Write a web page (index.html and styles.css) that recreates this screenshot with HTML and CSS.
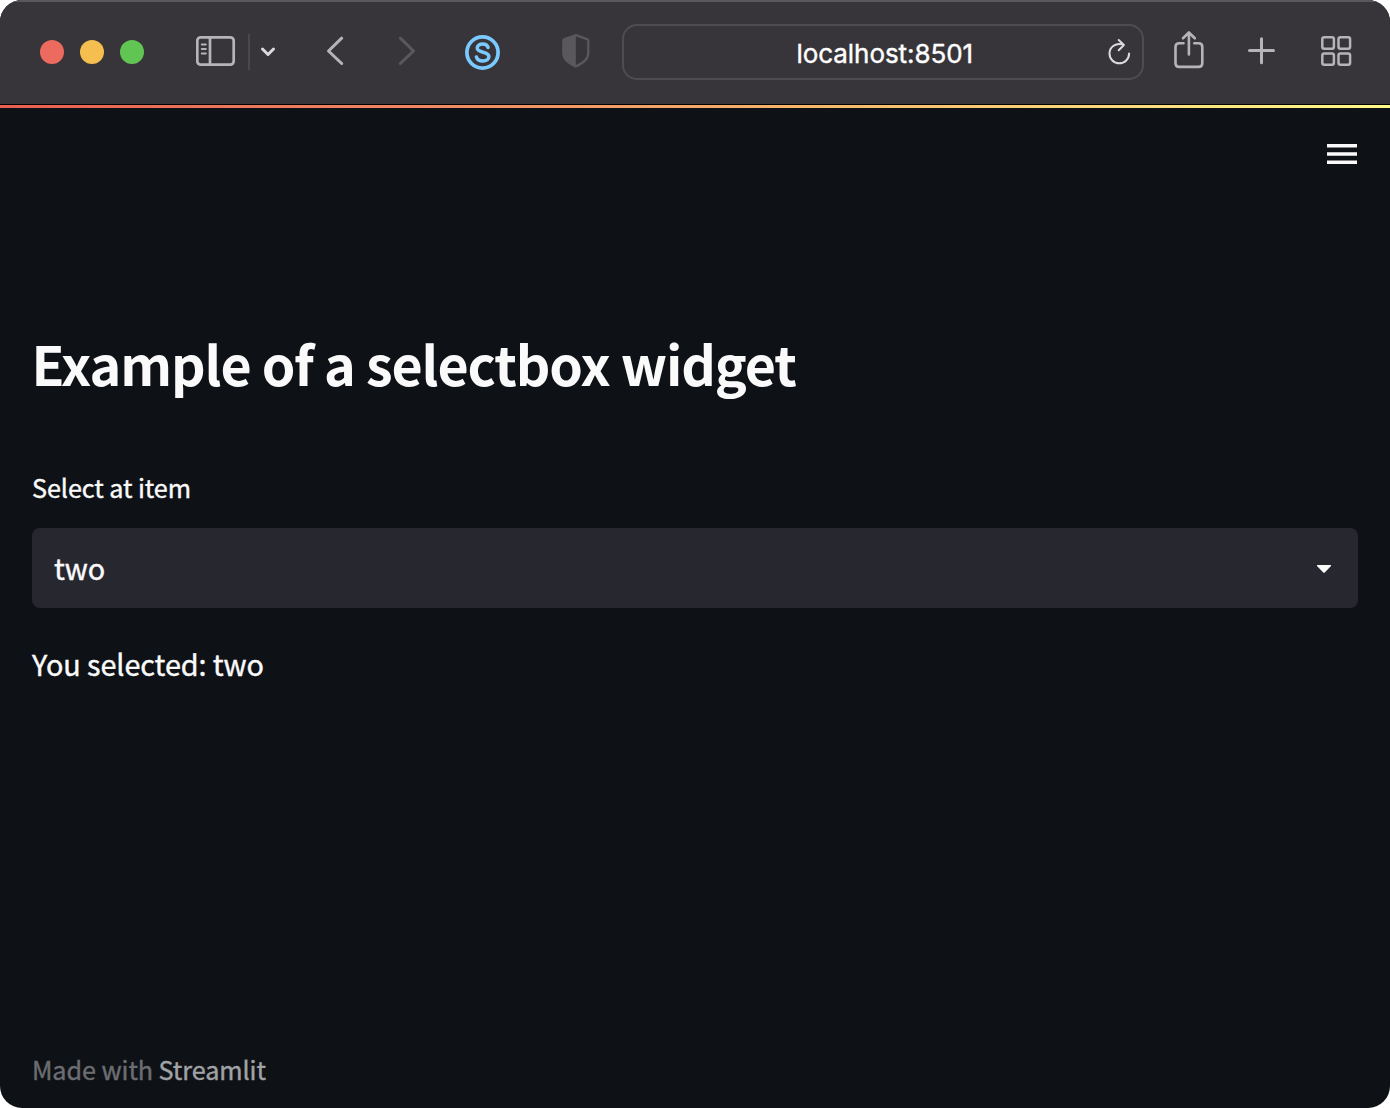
FILE: index.html
```html
<!DOCTYPE html>
<html lang="en">
<head>
<meta charset="utf-8">
<title>Example of a selectbox widget</title>
<link rel="stylesheet" href="styles.css">
</head>
<body>
<div class="window">
  <header class="toolbar">
    <div class="lights"><span class="light red"></span><span class="light yellow"></span><span class="light green"></span></div>
    <svg class="sidebar-icon" width="40" height="32" viewBox="0 0 40 32" fill="none" stroke="#b7b4b9" stroke-width="2.7" stroke-linecap="round"><rect x="1.3" y="2.3" width="36.4" height="27.4" rx="3.5"/><path d="M14 2.5v27"/><path d="M5.8 9.5h4M5.8 14h4M5.8 18.5h4" stroke-width="2"/></svg>
    <span class="divider"></span>
    <svg class="chevron" width="16" height="12" viewBox="0 0 16 12" fill="none" stroke="#dddadf" stroke-width="3" stroke-linecap="round" stroke-linejoin="round"><path d="M2.5 3 8 8.5 13.5 3"/></svg>
    <svg class="back" width="18" height="32" viewBox="0 0 18 32" fill="none" stroke="#b7b4b9" stroke-width="3" stroke-linecap="round" stroke-linejoin="round"><path d="M15.7 3.2 2.5 16l13.2 12.5"/></svg>
    <svg class="forward" width="18" height="32" viewBox="0 0 18 32" fill="none" stroke="#5b585d" stroke-width="3" stroke-linecap="round" stroke-linejoin="round"><path d="M2.3 3.2 15.5 16 2.3 28.5"/></svg>
    <svg class="extension" width="36" height="36" viewBox="0 0 36 36" fill="none" stroke="#7bcaff"><circle cx="17.5" cy="17.5" r="15.6" stroke-width="3.7"/><path d="M23.1 12.4C22.3 10.3 20.4 9.1 17.7 9.1c-3.200 0-5.500 1.600-5.500 4 0 5.400 11.700 2.800 11.700 8.500 0 2.800-2.600 4.400-6 4.400-3.100 0-5.700-1.300-6.500-4" stroke-width="3.500" stroke-linecap="round"/></svg>
    <svg class="shield" width="28" height="34" viewBox="0 0 28 34"><path d="M13.8 1.2 25 5.1q1.3.5 1.3 1.8v12c0 6.300-5 9.700-12.500 13.600C6.300 28.600 1.300 25.200 1.300 18.900v-12q0-1.300 1.300-1.800z" fill="none" stroke="#5b585d" stroke-width="2.300"/><path d="M13.800 1.200 2.600 5.100Q1.300 5.600 1.300 6.900v12c0 6.300 5 9.700 12.500 13.600z" fill="#5b585d"/></svg>
    <div class="address"><span class="url">localhost:8501</span>
      <svg class="reload" width="24" height="28" viewBox="0 0 24 28" fill="none" stroke="#dddadf" stroke-width="2" stroke-linecap="round" stroke-linejoin="round"><path d="M15.5 6.2C8 4.7 2.5 9.5 2.5 15.5a9.800 9.800 0 0 0 19.600 0"/><path d="M11.700 2 16.900 7l-5.200 5.200"/></svg>
    </div>
    <svg class="share" width="30" height="40" viewBox="0 0 30 40" fill="none" stroke="#b7b4b9" stroke-width="2.600" stroke-linecap="round" stroke-linejoin="round"><path d="M9.500 13.200H5.200Q1.500 13.200 1.500 16.900v16.300q0 3.700 3.700 3.700h19.400q3.700 0 3.700-3.700V16.900q0-3.700-3.700-3.700h-4.300M14.900 24.500V3.300M9 8.300l5.900-5.800 5.900 5.800"/></svg>
    <svg class="plus" width="28" height="28" viewBox="0 0 28 28" stroke="#b7b4b9" stroke-width="3" stroke-linecap="round"><path d="M1.500 13.600h24M13.500 1.700v24"/></svg>
    <svg class="grid" width="31" height="32" viewBox="0 0 31 32" fill="none" stroke="#b7b4b9" stroke-width="2.500"><rect x="1.300" y="2.200" width="11.600" height="11.600" rx="2"/><rect x="17.500" y="2.200" width="11.600" height="11.600" rx="2"/><rect x="1.300" y="18.400" width="11.600" height="11.400" rx="2"/><rect x="17.500" y="18.400" width="11.600" height="11.400" rx="2"/></svg>
  </header>
  <div class="decoration"></div>
  <nav class="menu"><svg width="30" height="20" viewBox="0 0 30 20" fill="#fafafa"><path d="M0 0h30v3.400H0zM0 8.300h30v3.400H0zM0 16.600h30V20H0z"/></svg></nav>
  <main class="content">
    <h1>Example of a selectbox widget</h1>
    <p class="label">Select at item</p>
    <div class="select"><span>two</span><svg class="caret" width="14" height="8" viewBox="0 0 14 8"><path d="M0 0h14v1L8 7.200q-1 1-2 0L0 1z" fill="#fafafa"/></svg></div>
    <p class="result">You selected: two</p>
  </main>
  <footer class="footer">Made with <span>Streamlit</span></footer>
</div>
</body>
</html>
```
FILE: styles.css
```css
* { box-sizing: border-box; }
body { margin: 0; background: #fff; color: #fafafa; font-family: "Noto Sans CJK SC", "Noto Sans", sans-serif; }
svg { display: block; flex: none; }
.window { width: 1390px; height: 1108px; display: flex; flex-direction: column; background: #0e1116; border-radius: 22px; overflow: hidden; -webkit-text-stroke: 0.4px; }
.toolbar { height: 104px; flex: none; display: flex; align-items: flex-start; padding-left: 40px; background: #38353a; border-top: 2px solid #5b595e; }
.lights { display: flex; gap: 16px; margin-top: 38px; }
.light { width: 24px; height: 24px; border-radius: 50%; }
.red { background: #ed6a5e; }
.yellow { background: #f5bf4f; }
.green { background: #61c554; }
.sidebar-icon { margin: 33px 0 0 52px; }
.divider { width: 2px; height: 36px; margin: 32px 0 0 12px; background: #4b484d; }
.chevron { margin: 44px 0 0 10px; }
.back { margin: 33px 0 0 50px; }
.forward { margin: 33px 0 0 54px; }
.extension { margin: 33px 0 0 49px; }
.shield { margin: 32px 0 0 61px; }
.address { width: 522px; height: 56px; flex: none; margin: 22px 0 0 32px; display: flex; align-items: center; justify-content: flex-end; border: 2px solid #4f4c51; border-radius: 15px; padding-right: 11px; }
.url { margin: 4px 134px 0 0; font: 26px/34px Inter, "Liberation Sans", sans-serif; letter-spacing: -0.07px; color: #fff; white-space: nowrap; }
.share { margin: 28px 0 0 30px; }
.plus { margin: 35px 0 0 44px; }
.grid { margin: 33px 0 0 45px; }
.decoration { height: 4px; flex: none; border-top: 1px solid #000; background: linear-gradient(90deg, #e85f53, #f08762 30%, #f5b96c 60%, #fffa88); }
.menu { display: flex; justify-content: flex-end; padding: 36px 33px 0 0; }
.content { padding: 159px 32px 0; }
h1 { margin: 0 0 0 -0.5px; font-size: 53.8px; line-height: 80px; font-weight: 700; letter-spacing: -1.09px; white-space: nowrap; -webkit-text-stroke: 0; }
.label { margin: 64px 0 0; font-size: 25.2px; line-height: 40px; letter-spacing: -0.08px; }
.select { display: flex; align-items: center; justify-content: space-between; height: 80px; margin-top: 21px; padding: 0 27px 0 22px; background: #272730; border-radius: 8px; font-size: 28.8px; line-height: 44px; }
.caret { margin-top: 2px; }
.result { margin: 32px 0 0; font-size: 28.8px; line-height: 48px; letter-spacing: -0.08px; }
.footer { margin: auto 0 19px 32px; font-size: 25.2px; line-height: 40px; letter-spacing: -0.08px; color: #6c6d71; }
.footer span { color: #a1a2a5; }
```
